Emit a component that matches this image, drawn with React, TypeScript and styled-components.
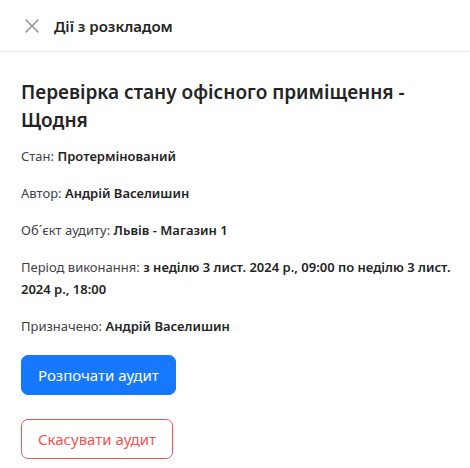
import { FC } from 'react';
import styled, { createGlobalStyle } from 'styled-components';

const GlobalStyle = createGlobalStyle`
  body {
    margin: 0;
    background: #fff;
    font-family: 'Noto Sans', 'Open Sans', sans-serif;
    color: #242424;
  }
`;

const Panel = styled.div`
  width: 470px;
  min-height: 468px;
  background: #fff;
`;

const Header = styled.header`
  display: flex;
  align-items: center;
  gap: 12px;
  height: 52px;
  padding: 0 22px;
  border-bottom: 1px solid #ebebeb;
  box-sizing: border-box;
`;

const CloseButton = styled.button`
  display: flex;
  align-items: center;
  justify-content: center;
  width: 20px;
  height: 20px;
  padding: 0;
  border: none;
  background: none;
  color: #8a8a8a;
  cursor: pointer;
`;

const HeaderTitle = styled.h2`
  margin: 0;
  font-size: 15px;
  font-weight: 600;
  color: #242424;
`;

const Body = styled.div`
  padding: 26px 8px 0 21px;
`;

const Title = styled.h1`
  margin: 0 0 11px;
  font-size: 19px;
  line-height: 28px;
  font-weight: 600;
  color: #242424;
`;

const Field = styled.p`
  margin: 0 0 15px;
  font-size: 13px;
  line-height: 22px;
  color: #424242;

  b {
    font-weight: 600;
    color: #242424;
  }
`;

const Actions = styled.div`
  display: flex;
  flex-direction: column;
  align-items: flex-start;
  gap: 24px;
  padding-top: 3px;
`;

const Button = styled.button<{ $variant: 'primary' | 'danger' }>`
  height: 40px;
  padding: 0 16px;
  border-radius: 7px;
  font-family: inherit;
  font-size: 15px;
  cursor: pointer;
  border: 1px solid
    ${({ $variant }) => ($variant === 'primary' ? '#1677ff' : '#f25353')};
  background: ${({ $variant }) => ($variant === 'primary' ? '#1677ff' : '#fff')};
  color: ${({ $variant }) => ($variant === 'primary' ? '#fff' : '#f25353')};
`;

const App: FC = () => {
  return (
    <Panel>
      <GlobalStyle />
      <Header>
        <CloseButton aria-label='Закрити'>
          <svg width='14' height='14' viewBox='0 0 14 14'>
            <path
              d='M1 1L13 13M13 1L1 13'
              stroke='currentColor'
              strokeWidth='1.4'
              strokeLinecap='round'
            />
          </svg>
        </CloseButton>
        <HeaderTitle>Дії з розкладом</HeaderTitle>
      </Header>
      <Body>
        <Title>Перевірка стану офісного приміщення - Щодня</Title>
        <Field>
          Стан: <b>Протермінований</b>
        </Field>
        <Field>
          Автор: <b>Андрій Васелишин</b>
        </Field>
        <Field>
          Об´єкт аудиту: <b>Львів - Магазин 1</b>
        </Field>
        <Field>
          Період виконання:{' '}
          <b>з неділю 3 лист. 2024 р., 09:00 по неділю 3 лист. 2024 р., 18:00</b>
        </Field>
        <Field>
          Призначено: <b>Андрій Васелишин</b>
        </Field>
        <Actions>
          <Button $variant='primary'>Розпочати аудит</Button>
          <Button $variant='danger'>Скасувати аудит</Button>
        </Actions>
      </Body>
    </Panel>
  );
};

export default App;
